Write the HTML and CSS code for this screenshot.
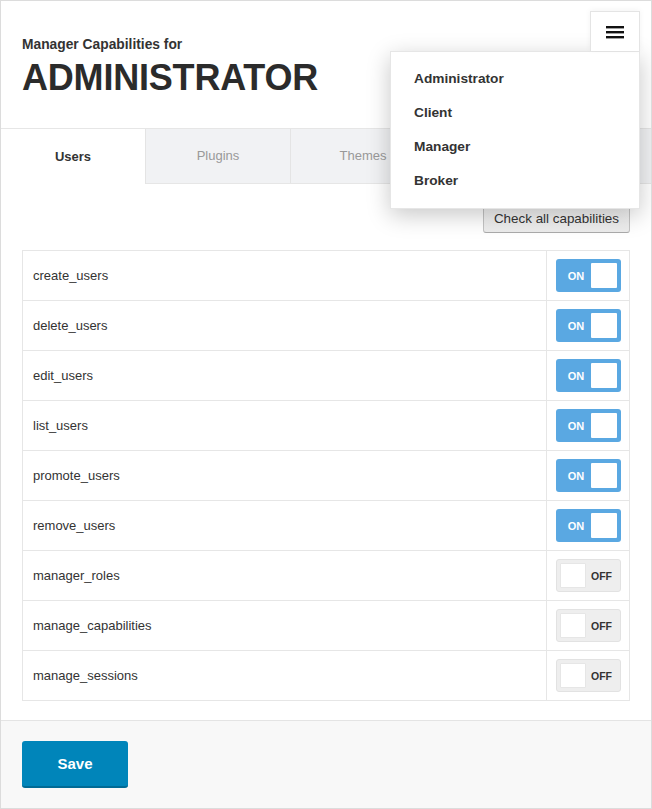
FILE: index.html
```html
<!DOCTYPE html>
<html>
<head>
<meta charset="utf-8">
<link rel="stylesheet" href="styles.css">
</head>
<body>
<div class="card">
  <header class="header">
    <div class="subtitle">Manager Capabilities for</div>
    <h1 class="title">ADMINISTRATOR</h1>
    <div class="menu-wrap">
      <button class="menu-btn" aria-label="menu">
        <svg width="18" height="14" viewBox="0 0 18 14"><rect x="0" y="1" width="18" height="2.4" fill="#111"/><rect x="0" y="6" width="18" height="2.4" fill="#111"/><rect x="0" y="11" width="18" height="2.4" fill="#111"/></svg>
      </button>
      <ul class="menu">
        <li>Administrator</li>
        <li>Client</li>
        <li>Manager</li>
        <li>Broker</li>
      </ul>
    </div>
  </header>
  <nav class="tabs">
    <div class="tab active">Users</div>
    <div class="tab">Plugins</div>
    <div class="tab">Themes</div>
    <div class="tab">Posts</div>
  </nav>
  <section class="content">
    <div class="actions"><button class="check-all">Check all capabilities</button></div>
    <table class="caps">
      <tr><td class="name">create_users</td><td class="sw"><span class="toggle on"><span class="lbl">ON</span><span class="knob"></span></span></td></tr>
      <tr><td class="name">delete_users</td><td class="sw"><span class="toggle on"><span class="lbl">ON</span><span class="knob"></span></span></td></tr>
      <tr><td class="name">edit_users</td><td class="sw"><span class="toggle on"><span class="lbl">ON</span><span class="knob"></span></span></td></tr>
      <tr><td class="name">list_users</td><td class="sw"><span class="toggle on"><span class="lbl">ON</span><span class="knob"></span></span></td></tr>
      <tr><td class="name">promote_users</td><td class="sw"><span class="toggle on"><span class="lbl">ON</span><span class="knob"></span></span></td></tr>
      <tr><td class="name">remove_users</td><td class="sw"><span class="toggle on"><span class="lbl">ON</span><span class="knob"></span></span></td></tr>
      <tr><td class="name">manager_roles</td><td class="sw"><span class="toggle off"><span class="knob"></span><span class="lbl">OFF</span></span></td></tr>
      <tr><td class="name">manage_capabilities</td><td class="sw"><span class="toggle off"><span class="knob"></span><span class="lbl">OFF</span></span></td></tr>
      <tr><td class="name">manage_sessions</td><td class="sw"><span class="toggle off"><span class="knob"></span><span class="lbl">OFF</span></span></td></tr>
    </table>
  </section>
  <footer class="footer">
    <button class="save">Save</button>
  </footer>
</div>
</body>
</html>
```

FILE: styles.css
```css
* { box-sizing: border-box; }
html, body { margin: 0; padding: 0; background: #fff; }
body { font-family: "Liberation Sans", Arial, sans-serif; color: #333; }

.card {
  width: 652px;
  height: 809px;
  border: 1px solid #dcdcdc;
  display: flex;
  flex-direction: column;
  overflow: hidden;
}

.header {
  position: relative;
  height: 128px;
  padding: 36px 21px 0;
  border-bottom: 1px solid #e6e6e6;
}
.subtitle {
  font-size: 13.8px;
  font-weight: bold;
  color: #333;
  line-height: 16px;
}
.title {
  margin: 5px 0 0;
  font-size: 36px;
  line-height: 40px;
  font-weight: bold;
  letter-spacing: -0.2px;
  color: #2b2b2b;
}

.menu-wrap {
  position: absolute;
  top: 10px;
  right: 11px;
  z-index: 10;
}
.menu-btn {
  margin-left: auto;
  width: 50px;
  height: 40px;
  padding: 0;
  background: #fff;
  border: 1px solid #e4e4e4;
  border-bottom: none;
  box-shadow: 0 -1px 6px rgba(0,0,0,0.05);
  display: flex;
  align-items: center;
  justify-content: center;
  position: relative;
  z-index: 2;
}
.menu {
  list-style: none;
  margin: 0;
  width: 250px;
  padding: 10px 0;
  background: #fff;
  border: 1px solid #e6e6e6;
  box-shadow: 0 6px 22px rgba(0,0,0,0.22);
  position: relative;
  z-index: 1;
}
.menu li {
  font-size: 13.7px;
  font-weight: bold;
  line-height: 34px;
  padding-left: 23px;
  color: #333;
}

.tabs {
  display: flex;
  height: 55px;
  background: #f1f2f4;
  border-bottom: 1px solid #e6e6e6;
}
.tab {
  flex: 0 0 145px;
  display: flex;
  align-items: center;
  justify-content: center;
  font-size: 13px;
  color: #999;
  border-right: 1px solid #e4e4e4;
  padding-bottom: 1px;
}
.tab.active {
  background: #fff;
  color: #333;
  font-weight: bold;
  margin-bottom: -1px;
}

.content {
  flex: 1;
  padding: 21px 21px 19px;
  border-bottom: 1px solid #e4e4e4;
}
.actions {
  display: flex;
  justify-content: flex-end;
  margin-bottom: 17px;
  line-height: 0;
}
.check-all {
  font-family: "Liberation Sans", Arial, sans-serif;
  font-size: 13.4px;
  line-height: 16px;
  color: #333;
  height: 28px;
  padding: 0 10px;
  background: linear-gradient(#f4f4f4, #ececec);
  border: 1px solid #c4c4c4;
  border-bottom-color: #aaa;
  border-radius: 3px;
}

.caps {
  width: 100%;
  border-collapse: collapse;
  border: 1px solid #e6e6e6;
}
.caps td {
  height: 50px;
  border-top: 1px solid #e6e6e6;
  padding: 0;
}
.caps .name {
  font-size: 13px;
  padding-left: 10px;
  color: #333;
}
.caps .sw {
  width: 83px;
  border-left: 1px solid #e6e6e6;
  padding-left: 9px;
}

.toggle {
  display: flex;
  align-items: center;
  width: 65px;
  height: 33px;
  border-radius: 3px;
  padding: 4px;
}
.toggle .knob {
  width: 26px;
  height: 25px;
  background: #fff;
  border-radius: 1px;
}
.toggle .lbl {
  flex: 1;
  text-align: center;
  font-size: 11px;
  font-weight: bold;
}
.toggle.on {
  background: #5aa8e2;
}
.toggle.on .lbl { color: #fff; padding-left: 1px; }
.toggle.off {
  background: #eeeeee;
  border: 1px solid #e2e2e2;
  padding: 3px;
}
.toggle.off .knob { border: 1px solid #e6e6e6; }
.toggle.off .lbl { color: #333; font-size: 10.5px; }

.footer {
  height: 87px;
  background: #f8f8f8;
  padding: 20px 21px 0;
}
.save {
  font-family: "Liberation Sans", Arial, sans-serif;
  width: 106px;
  height: 47px;
  background: #0085ba;
  border: none;
  border-bottom: 2px solid #006a95;
  border-radius: 3px;
  color: #fff;
  font-size: 15px;
  font-weight: bold;
}
```
